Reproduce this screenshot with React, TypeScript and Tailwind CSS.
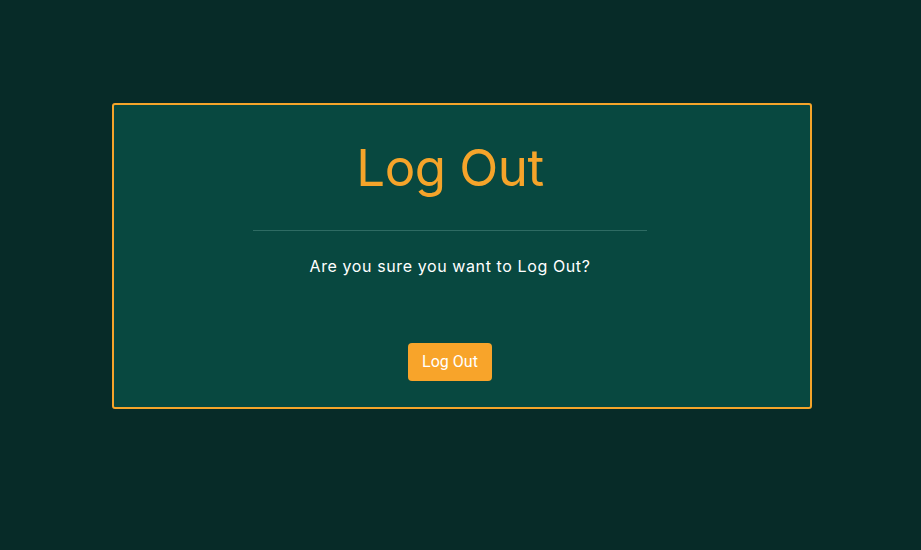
export default function App() {
  return (
    <div className="min-h-[550px] w-full bg-[#072b28] flex items-start justify-center pt-[103px] font-['Inter','Liberation_Sans',sans-serif]">
      {/* Logout card */}
      <div className="ml-[2px] w-[700px] h-[306px] bg-[#084840] border-2 border-[#f5a42a] rounded-[3px] flex flex-col items-center pl-[10px] pr-[33px]">
        <h1 className="mt-[31px] text-[51px] leading-[64px] text-[#f5a42a] font-normal tracking-[-0.5px]">Log Out</h1>
        <div className="mt-[30px] w-[394px] h-px bg-[#2e6b63]" />
        <p className="mt-[23px] text-[16px] leading-[24px] text-white tracking-[0.6px] font-normal">
          Are you sure you want to Log Out?
        </p>
        <button
          type="button"
          className="mt-[65px] w-[84px] h-[38px] rounded-[4px] bg-[#f8a42a] text-white text-[16px] font-['Roboto',sans-serif]"
        >
          Log Out
        </button>
      </div>
    </div>
  );
}
